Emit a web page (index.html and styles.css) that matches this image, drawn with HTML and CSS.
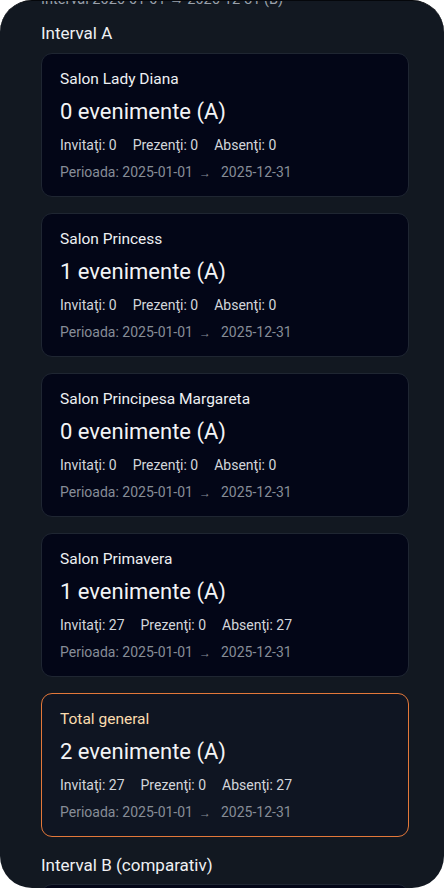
FILE: index.html
```html
<!DOCTYPE html>
<html lang="ro">
<head>
    <meta charset="UTF-8">
    <meta name="viewport" content="width=device-width, initial-scale=1.0">
    <title>Rapoarte saloane</title>
    <link rel="stylesheet" href="styles.css">
</head>
<body>
    <div class="sheet">
        <div class="scroll">
            <p class="prev-range">Interval 2026-01-01 → 2026-12-31 (B)</p>

            <h2 class="section-title">Interval A</h2>

            <div class="card">
                <div class="card-title">Salon Lady Diana</div>
                <div class="card-count">0 evenimente (A)</div>
                <div class="card-stats">
                    <span>Invitaţi: 0</span>
                    <span>Prezenţi: 0</span>
                    <span>Absenţi: 0</span>
                </div>
                <div class="card-period">Perioada: 2025-01-01<span class="arrow">→</span>2025-12-31</div>
            </div>

            <div class="card">
                <div class="card-title">Salon Princess</div>
                <div class="card-count">1 evenimente (A)</div>
                <div class="card-stats">
                    <span>Invitaţi: 0</span>
                    <span>Prezenţi: 0</span>
                    <span>Absenţi: 0</span>
                </div>
                <div class="card-period">Perioada: 2025-01-01<span class="arrow">→</span>2025-12-31</div>
            </div>

            <div class="card">
                <div class="card-title">Salon Principesa Margareta</div>
                <div class="card-count">0 evenimente (A)</div>
                <div class="card-stats">
                    <span>Invitaţi: 0</span>
                    <span>Prezenţi: 0</span>
                    <span>Absenţi: 0</span>
                </div>
                <div class="card-period">Perioada: 2025-01-01<span class="arrow">→</span>2025-12-31</div>
            </div>

            <div class="card">
                <div class="card-title">Salon Primavera</div>
                <div class="card-count">1 evenimente (A)</div>
                <div class="card-stats">
                    <span>Invitaţi: 27</span>
                    <span>Prezenţi: 0</span>
                    <span>Absenţi: 27</span>
                </div>
                <div class="card-period">Perioada: 2025-01-01<span class="arrow">→</span>2025-12-31</div>
            </div>

            <div class="card total">
                <div class="card-title">Total general</div>
                <div class="card-count">2 evenimente (A)</div>
                <div class="card-stats">
                    <span>Invitaţi: 27</span>
                    <span>Prezenţi: 0</span>
                    <span>Absenţi: 27</span>
                </div>
                <div class="card-period">Perioada: 2025-01-01<span class="arrow">→</span>2025-12-31</div>
            </div>

            <h2 class="section-title section-b">Interval B (comparativ)</h2>

            <div class="card">
                <div class="card-title">Salon Lady Diana</div>
                <div class="card-count">0 evenimente (B)</div>
            </div>
        </div>
    </div>
</body>
</html>
```

FILE: styles.css
```css
* {
    margin: 0;
    padding: 0;
    box-sizing: border-box;
}

body {
    background: #ffffff;
    font-family: Roboto, 'Noto Sans', sans-serif;
    color: #eceef1;
    width: 444px;
    height: 888px;
    overflow: hidden;
}

.sheet {
    width: 444px;
    height: 888px;
    background: #121821;
    border-radius: 32px;
    overflow: hidden;
    border-top: 1px solid #05070b;
}

.scroll {
    padding: 0 35px 0 41px;
    margin-top: -11px;
}

.prev-range {
    font-size: 14.5px;
    line-height: 20px;
    color: #9aa1ab;
}

.section-title {
    font-size: 17px;
    font-weight: 400;
    line-height: 22px;
    color: #eef0f3;
    margin: 12px 0 9px;
}

.section-b {
    margin: 17px 0 8px;
}

.card {
    background: #030617;
    border: 1px solid #1f2632;
    border-radius: 11px;
    padding: 15px 17px 15px 18px;
    margin-bottom: 16px;
}

.card.total {
    background: #0f1522;
    border-color: #e3783a;
    margin-bottom: 0;
}

.card-title {
    font-size: 15.5px;
    font-weight: 400;
    line-height: 20px;
    color: #eef0f3;
}

.total .card-title {
    color: #fbdcae;
}

.card-count {
    font-size: 22px;
    line-height: 28px;
    margin-top: 9px;
    color: #f3f4f6;
}

.card-stats {
    display: flex;
    gap: 16px;
    font-size: 14px;
    line-height: 18px;
    margin-top: 10px;
    color: #d3d6db;
}

.card-period {
    font-size: 14px;
    line-height: 18px;
    margin-top: 9px;
    color: #878d97;
}

.arrow {
    font-size: 12px;
    line-height: 1;
    margin: 0 10px 0 6px;
}
```
